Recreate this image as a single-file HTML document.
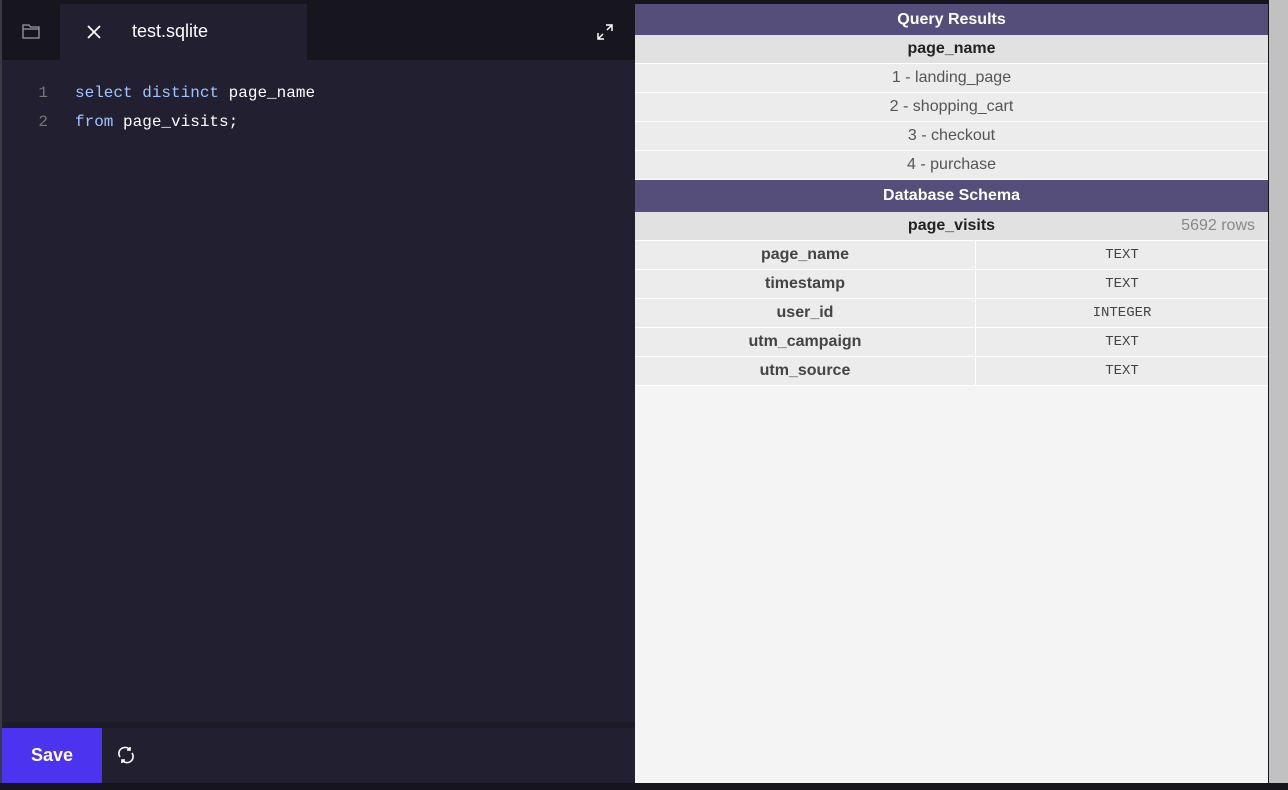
<!DOCTYPE html>
<html><head><style>
*{margin:0;padding:0;box-sizing:border-box}
body{width:1288px;height:790px;background:#16151e;position:relative;overflow:hidden;font-family:"Liberation Sans",sans-serif}
.left{position:absolute;left:2px;top:0;width:633px;height:783px;background:#211f30}
.lborder{position:absolute;left:0;top:0;width:2px;height:783px;background:#3a3a44}
.topbar{position:absolute;left:0;top:0;width:633px;height:60px;background:#17161f}
.tab{position:absolute;left:58px;top:4px;width:247px;height:56px;background:#211f30;color:#fff;font-size:18px}
.code{position:absolute;top:79px;left:0;font-family:"Liberation Mono",monospace;font-size:16px;line-height:29px;color:#fff}
.ln{display:inline-block;width:46px;text-align:right;color:#777;margin-right:27px}
.kw{color:#9fc4ff}
.bottom{position:absolute;left:0;top:722px;width:633px;height:6px;background:#1c1b28}
.save{position:absolute;left:2px;top:728px;width:100px;height:55px;background:#4b33f0;color:#fff;font-weight:bold;font-size:18px;text-align:center;line-height:55px}
.right{position:absolute;left:635px;top:4px;width:633px;height:779px;background:#f4f4f4}
.hdr{height:31px;background:#554e7a;color:#fff;font-weight:bold;font-size:16px;text-align:center;line-height:31px}
.row{height:29px;border-bottom:1px solid #fff;background:#ececec;color:#555;font-size:16px;text-align:center;line-height:28px}
.row.h{background:#e1e1e1;color:#222;font-weight:bold}
.sr{display:flex;height:29px;border-bottom:1px solid #fff;background:#ececec;font-size:16px;line-height:28px}
.sr div:first-child{width:341px;text-align:center;font-weight:bold;color:#444;border-right:1px solid #fff}
.sr div:last-child{flex:1;text-align:center;font-family:"Liberation Mono",monospace;font-size:14px;color:#444}
.scroll{position:absolute;left:1269px;top:0;width:19px;height:783px;background:#c1c1c1}
</style></head><body>
<div class="left">
<div class="topbar"></div>
<svg style="position:absolute;left:20px;top:24px" width="18" height="15" viewBox="0 0 18 15" fill="none" stroke="#9a9aa8" stroke-width="1.3"><path d="M1 1h6l1.5 2H17v11H1z M1 5h16"/></svg>
<div class="tab">
<svg style="position:absolute;left:27px;top:21px" width="14" height="14" viewBox="0 0 14 14" stroke="#fff" stroke-width="1.8"><path d="M1 1L13 13M13 1L1 13"/></svg>
<span style="position:absolute;left:72px;top:17px">test.sqlite</span></div>
<svg style="position:absolute;left:595px;top:24px" width="16" height="16" viewBox="0 0 16 16" fill="none" stroke="#fff" stroke-width="1.5"><path d="M9 1h6v6M15 1L10 6M7 15H1V9M1 15l5-5"/></svg>
<div class="code"><div><span class="ln">1</span><span class="kw">select distinct</span> page_name</div><div><span class="ln">2</span><span class="kw">from</span> page_visits;</div></div>
<div class="bottom"></div>
</div>
<div class="lborder"></div>
<div class="save">Save</div>
<svg style="position:absolute;left:116px;top:745px" width="20" height="20" viewBox="0 0 20 20" fill="none" stroke="#fff" stroke-width="1.6"><path d="M4 12a6 6 0 0 1 10-7M16 8a6 6 0 0 1-10 7M14 2v3h-3M6 18v-3h3"/></svg>
<div class="right">
<div class="hdr">Query Results</div>
<div class="row h">page_name</div>
<div class="row">1 - landing_page</div>
<div class="row">2 - shopping_cart</div>
<div class="row">3 - checkout</div>
<div class="row">4 - purchase</div>
<div class="hdr" style="height:32px;line-height:32px">Database Schema</div>
<div class="row h" style="position:relative">page_visits<span style="position:absolute;right:13px;font-weight:normal;color:#888">5692 rows</span></div>
<div class="sr"><div>page_name</div><div>TEXT</div></div>
<div class="sr"><div>timestamp</div><div>TEXT</div></div>
<div class="sr"><div>user_id</div><div>INTEGER</div></div>
<div class="sr"><div>utm_campaign</div><div>TEXT</div></div>
<div class="sr"><div>utm_source</div><div>TEXT</div></div>
</div>
<div class="scroll"></div>
</body></html>
